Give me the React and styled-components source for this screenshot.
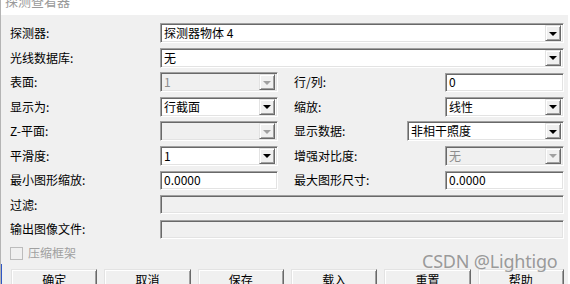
import React from "react";
import styled, { createGlobalStyle } from "styled-components";

const Global = createGlobalStyle`
  html, body { margin: 0; padding: 0; background: #fff; }
  body { font-family: "Noto Sans CJK SC", "Noto Sans", sans-serif; }
  * { box-sizing: border-box; }
`;

const Window = styled.div`
  position: relative;
  width: 570px;
  height: 284px;
  overflow: hidden;
  background: #fff;
  border-left: 1px solid #b4b4b4;
  &::after {
    content: "";
    position: absolute;
    left: -1px;
    top: 264px;
    width: 2px;
    height: 20px;
    background: #2f56c6;
  }
`;

const TitleBar = styled.div`
  height: 15px;
  overflow: hidden;
  background: #fff;
  padding-left: 4px;
`;

const TitleText = styled.div`
  margin-top: -6px;
  font-size: 13px;
  line-height: 14px;
  color: #9a9a9a;
`;

const Body = styled.div`
  width: 567px;
  height: 269px;
  background: #f0f0f0;
  padding: 8px 0 0 9px;
  display: flex;
  flex-direction: column;
`;

const Rows = styled.div`
  width: 554px;
  display: flex;
  flex-direction: column;
  gap: 4.5px;
`;

const FullRow = styled.div`
  display: grid;
  grid-template-columns: 150px 1fr;
  height: 20px;
  align-items: center;
`;

const HalfRow = styled.div`
  display: grid;
  grid-template-columns: 150px 118px 1fr;
  height: 20px;
  align-items: center;
`;

const RightPart = styled.div`
  display: flex;
  align-items: center;
  justify-content: space-between;
  padding-left: 16px;
  height: 20px;
`;

const Label = styled.span`
  font-size: 12px;
  line-height: 16px;
  color: #000;
  white-space: nowrap;
`;

const Field = styled.div`
  position: relative;
  height: ${(p) => (p.$tall ? 20 : 19)}px;
  width: ${(p) => (p.$w ? `${p.$w}px` : "100%")};
  background: ${(p) => (p.$disabled ? "#f0f0f0" : "#fff")};
  border: 1px solid;
  border-color: #a0a0a0 #fff #fff #a0a0a0;
  box-shadow: inset 1px 1px #696969, inset -1px -1px #e3e3e3;
  display: flex;
  align-items: center;
  padding: 0 2px 0 3px;
  font-size: 12px;
  color: ${(p) => (p.$disabled ? "#8d8d8d" : "#000")};
`;

const Value = styled.span`
  flex: 1;
  line-height: 16px;
  white-space: nowrap;
`;

const DropBtn = styled.div`
  flex: none;
  width: 16px;
  height: 16px;
  background: #f0f0f0;
  border: 1px solid;
  border-color: #e3e3e3 #696969 #696969 #e3e3e3;
  box-shadow: inset 1px 1px #fff, inset -1px -1px #a0a0a0;
  display: flex;
  align-items: center;
  justify-content: center;
  &::before {
    content: "";
    width: 0;
    height: 0;
    border-left: 4px solid transparent;
    border-right: 4px solid transparent;
    border-top: 4px solid ${(p) => (p.$disabled ? "#a0a0a0" : "#000")};
    margin-top: 1px;
  }
`;

const Combo = ({ value, w, disabled }) => (
  <Field $tall $w={w} $disabled={disabled}>
    <Value>{value}</Value>
    <DropBtn $disabled={disabled} />
  </Field>
);

const Text = ({ value, w, disabled }) => (
  <Field $w={w} $disabled={disabled}>
    <Value>{value}</Value>
  </Field>
);

const CheckRow = styled.div`
  display: flex;
  align-items: center;
  gap: 5px;
  margin-top: 7px;
  height: 14px;
`;

const Box = styled.div`
  width: 13px;
  height: 13px;
  border: 1px solid #bcbcbc;
  background: #f0f0f0;
`;

const CheckLabel = styled.span`
  font-size: 12px;
  line-height: 16px;
  color: #a0a0a0;
`;

const Buttons = styled.div`
  display: flex;
  gap: 7px;
  width: 553px;
  margin-top: 9px;
  margin-left: 1px;
`;

const Button = styled.div`
  flex: 1;
  height: 23px;
  background: #f0f0f0;
  border: 1px solid;
  border-color: #e3e3e3 #696969 #696969 #e3e3e3;
  box-shadow: inset 1px 1px #fff, inset -1px -1px #a0a0a0;
  display: flex;
  justify-content: center;
  padding-top: 2px;
  font-size: 12px;
  line-height: 16px;
  color: #000;
`;

const Watermark = styled.div`
  position: absolute;
  left: 421px;
  top: 249px;
  font-family: "Noto Sans", sans-serif;
  font-size: 18px;
  line-height: 24px;
  color: rgba(130, 130, 130, 0.8);
  letter-spacing: -0.2px;
  white-space: nowrap;
  pointer-events: none;
`;

export default function App() {
  return (
    <>
      <Global />
      <Window>
        <TitleBar>
          <TitleText>探测查看器</TitleText>
        </TitleBar>
        <Body>
          <Rows>
            <FullRow>
              <Label>探测器:</Label>
              <Combo value="探测器物体 4" />
            </FullRow>
            <FullRow>
              <Label>光线数据库:</Label>
              <Combo value="无" />
            </FullRow>
            <HalfRow>
              <Label>表面:</Label>
              <Combo value="1" disabled />
              <RightPart>
                <Label>行/列:</Label>
                <Text value="0" w={119} />
              </RightPart>
            </HalfRow>
            <HalfRow>
              <Label>显示为:</Label>
              <Combo value="行截面" />
              <RightPart>
                <Label>缩放:</Label>
                <Combo value="线性" w={119} />
              </RightPart>
            </HalfRow>
            <HalfRow>
              <Label>Z-平面:</Label>
              <Combo value="" disabled />
              <RightPart>
                <Label>显示数据:</Label>
                <Combo value="非相干照度" w={157} />
              </RightPart>
            </HalfRow>
            <HalfRow>
              <Label>平滑度:</Label>
              <Combo value="1" />
              <RightPart>
                <Label>增强对比度:</Label>
                <Combo value="无" w={119} disabled />
              </RightPart>
            </HalfRow>
            <HalfRow>
              <Label>最小图形缩放:</Label>
              <Text value="0.0000" />
              <RightPart>
                <Label>最大图形尺寸:</Label>
                <Text value="0.0000" w={119} />
              </RightPart>
            </HalfRow>
            <FullRow>
              <Label>过滤:</Label>
              <Text value="" disabled />
            </FullRow>
            <FullRow>
              <Label>输出图像文件:</Label>
              <Text value="" disabled />
            </FullRow>
          </Rows>
          <CheckRow>
            <Box />
            <CheckLabel>压缩框架</CheckLabel>
          </CheckRow>
          <Buttons>
            <Button>确定</Button>
            <Button>取消</Button>
            <Button>保存</Button>
            <Button>载入</Button>
            <Button>重置</Button>
            <Button>帮助</Button>
          </Buttons>
        </Body>
        <Watermark>CSDN @Lightigo</Watermark>
      </Window>
    </>
  );
}
